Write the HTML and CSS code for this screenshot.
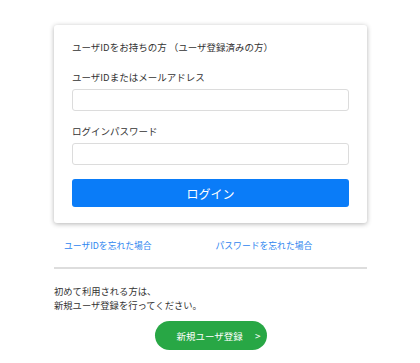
FILE: index.html
```html
<!DOCTYPE html>
<html lang="ja">
<head>
    <meta charset="UTF-8">
    <title>ログイン</title>
    <link rel="stylesheet" href="styles.css">
</head>
<body>
<div class="wrap">
    <div class="card">
        <p class="lead">ユーザIDをお持ちの方 （ユーザ登録済みの方）</p>
        <form class="loginForm" action="javascript:void(0)">
            <label class="label" for="userId">ユーザIDまたはメールアドレス</label>
            <input class="input" type="text" id="userId">
            <label class="label" for="pass">ログインパスワード</label>
            <input class="input" type="password" id="pass">
            <button type="submit" class="btnLogin">ログイン</button>
        </form>
    </div>
    <div class="links">
        <a href="#" class="link">ユーザIDを忘れた場合</a>
        <a href="#" class="link">パスワードを忘れた場合</a>
    </div>
    <hr class="line">
    <p class="note">初めて利用される方は、<br>新規ユーザ登録を行ってください。</p>
    <div class="regist">
        <button type="button" class="btnRegist">新規ユーザ登録<span class="arrow">&gt;</span></button>
    </div>
</div>
</body>
</html>
```
FILE: styles.css
```css
body{
    margin: 0;
    background-color: #fff;
    font-family: "Noto Sans CJK JP", "Noto Sans", sans-serif;
    color: #333;
}
.wrap{
    width: 313px;
    margin: 0 auto;
    padding-top: 25px;
    padding-left: 1px;
}
.card{
    background-color: #fff;
    border-radius: 3px;
    box-shadow: 0 1px 5px rgba(0,0,0,0.3);
    padding: 14px 18px 16px;
}
.lead{
    margin: 0 0 14px;
    font-size: 9.5px;
    line-height: 16px;
}
.loginForm{
    display: flex;
    flex-direction: column;
}
.label{
    font-size: 9.5px;
    line-height: 16px;
    margin-bottom: 4px;
}
.input{
    height: 22px;
    box-sizing: border-box;
    border: 1px solid #dcdcdc;
    border-radius: 3px;
    margin: 0 0 12px;
    padding: 0 6px;
}
.btnLogin{
    height: 28px;
    margin-top: 2px;
    border: none;
    border-radius: 3px;
    background-color: #0a7cf8;
    color: #fff;
    font-family: inherit;
    font-size: 12px;
}
.links{
    display: flex;
    padding: 16px 0 0 10px;
}
.link{
    font-size: 8.8px;
    line-height: 14px;
    color: #2f86ef;
    text-decoration: none;
    width: 156px;
}
.line{
    border: none;
    border-top: 2px solid #ddd;
    margin: 14px 0 0;
}
.note{
    margin: 15px 0 0;
    font-size: 9.3px;
    line-height: 14px;
}
.regist{
    display: flex;
    justify-content: center;
    padding-top: 9px;
}
.btnRegist{
    width: 112px;
    height: 29px;
    border: none;
    border-radius: 15px;
    background-color: #28a745;
    color: #fff;
    font-family: inherit;
    font-size: 9.5px;
    padding: 0 0 0 16px;
}
.arrow{
    margin-left: 12px;
    font-size: 10px;
}
```
